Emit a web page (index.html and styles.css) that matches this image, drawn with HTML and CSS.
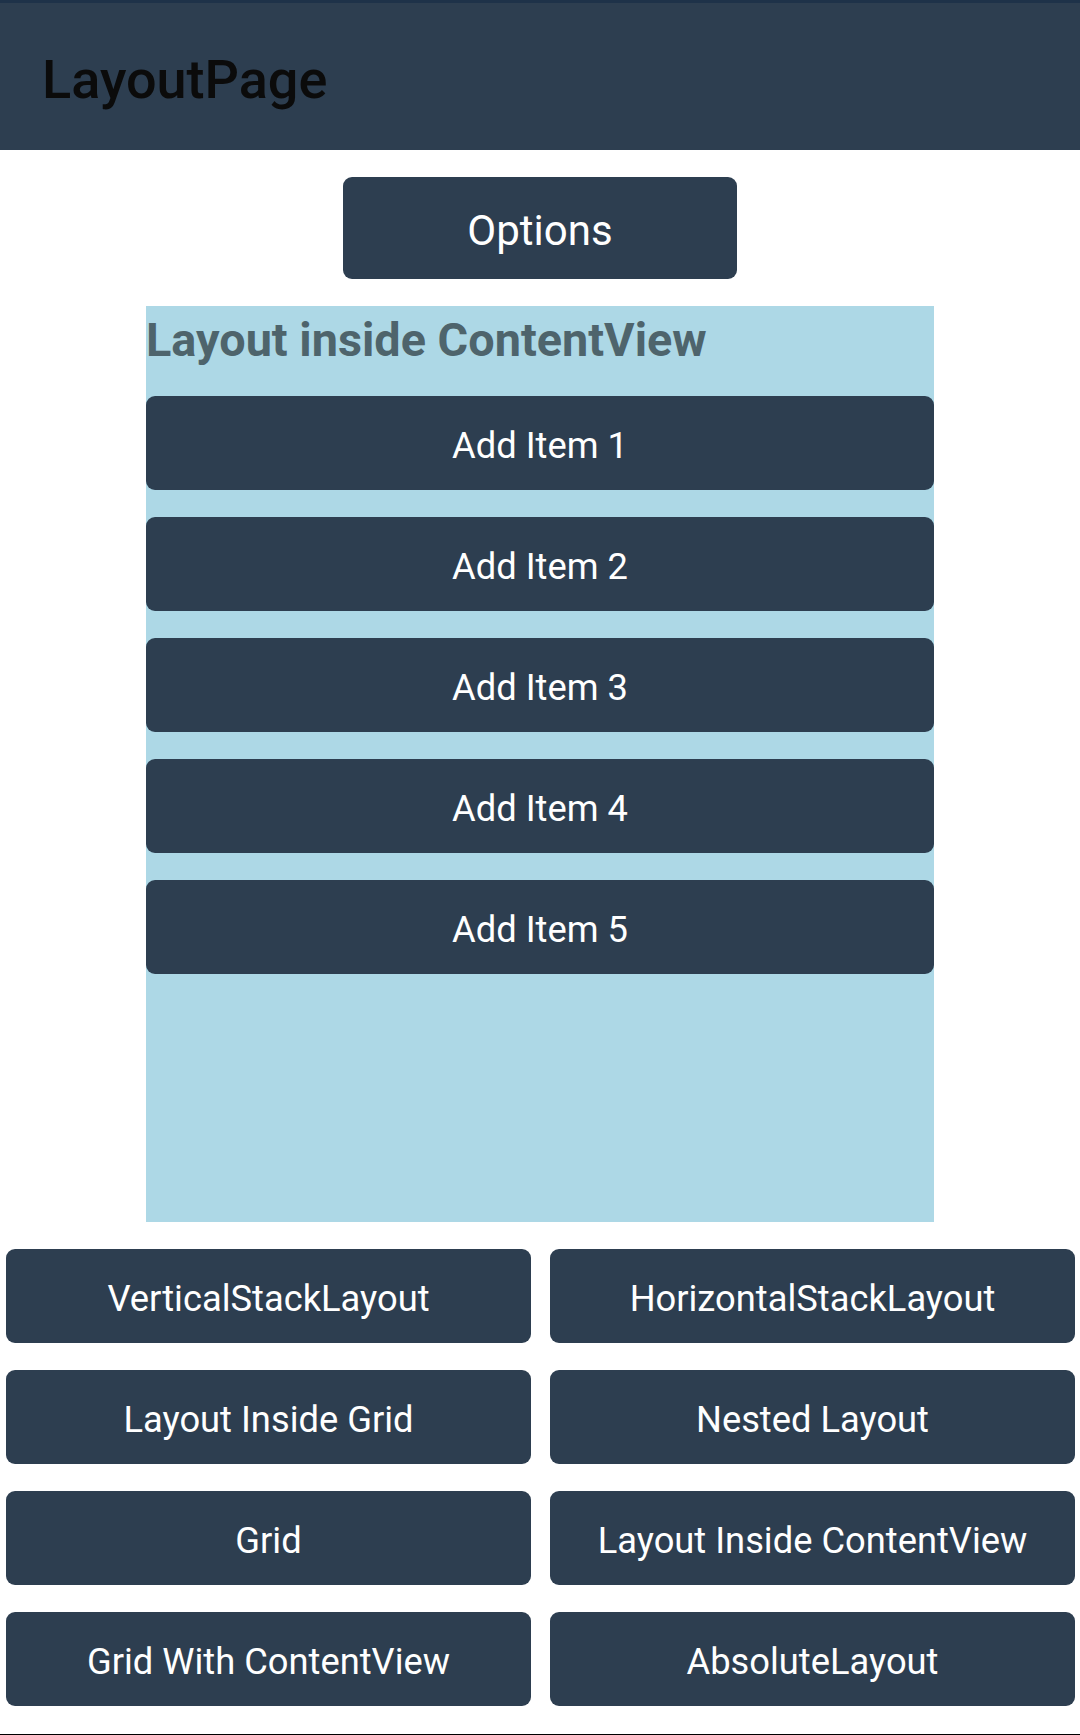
FILE: index.html
```html
<!DOCTYPE html>
<html lang="en">
<head>
<meta charset="utf-8">
<title>LayoutPage</title>
<link rel="stylesheet" href="styles.css">
</head>
<body>
<div class="page">
  <header class="toolbar">
    <h1 class="toolbar-title">LayoutPage</h1>
  </header>
  <main class="content">
    <button class="btn btn-options">Options</button>
    <section class="cv-box">
      <h2 class="cv-title">Layout inside ContentView</h2>
      <div class="cv-list">
        <button class="btn btn-item">Add Item 1</button>
        <button class="btn btn-item">Add Item 2</button>
        <button class="btn btn-item">Add Item 3</button>
        <button class="btn btn-item">Add Item 4</button>
        <button class="btn btn-item">Add Item 5</button>
      </div>
    </section>
    <nav class="nav-grid">
      <button class="btn btn-item">VerticalStackLayout</button>
      <button class="btn btn-item">HorizontalStackLayout</button>
      <button class="btn btn-item">Layout Inside Grid</button>
      <button class="btn btn-item">Nested Layout</button>
      <button class="btn btn-item">Grid</button>
      <button class="btn btn-item">Layout Inside ContentView</button>
      <button class="btn btn-item">Grid With ContentView</button>
      <button class="btn btn-item">AbsoluteLayout</button>
    </nav>
  </main>
  <div class="bottom-edge"></div>
</div>
</body>
</html>
```

FILE: styles.css
```css
* {
  box-sizing: border-box;
}

html, body {
  margin: 0;
  padding: 0;
  background: #ffffff;
}

body {
  font-family: Roboto, "Noto Sans", "Liberation Sans", sans-serif;
}

.page {
  width: 1080px;
  min-height: 1735px;
  display: flex;
  flex-direction: column;
}

.toolbar {
  height: 150px;
  background: #2d3e50;
  border-top: 3px solid #1e3249;
  padding: 45px 0 0 42px;
}

.toolbar-title {
  margin: 0;
  font-size: 54px;
  line-height: 63px;
  font-weight: 500;
  color: #0b0b0b;
}

.content {
  display: flex;
  flex-direction: column;
  align-items: center;
  padding-top: 27px;
}

.btn {
  border: none;
  margin: 0;
  padding: 4px 0 0 0;
  background: #2d3e50;
  color: #ffffff;
  font-family: Roboto, "Noto Sans", "Liberation Sans", sans-serif;
  border-radius: 9px;
  display: flex;
  align-items: center;
  justify-content: center;
  white-space: nowrap;
}

.btn-options {
  width: 394px;
  height: 102px;
  font-size: 42px;
}

.btn-item {
  width: 100%;
  height: 94px;
  font-size: 36.3px;
}

.cv-box {
  margin-top: 27px;
  width: 788px;
  height: 916px;
  background: #add8e6;
}

.cv-title {
  margin: 0 0 28px 0;
  padding-top: 6px;
  font-size: 46.8px;
  line-height: 56px;
  font-weight: 700;
  color: #4e646c;
}

.cv-list {
  display: flex;
  flex-direction: column;
  gap: 27px;
}

.nav-grid {
  margin-top: 27px;
  width: 100%;
  padding: 0 5px 0 6px;
  display: grid;
  grid-template-columns: 1fr 1fr;
  column-gap: 19px;
  row-gap: 27px;
}

.bottom-edge {
  margin-top: auto;
  height: 1px;
  background: #000000;
}
```
